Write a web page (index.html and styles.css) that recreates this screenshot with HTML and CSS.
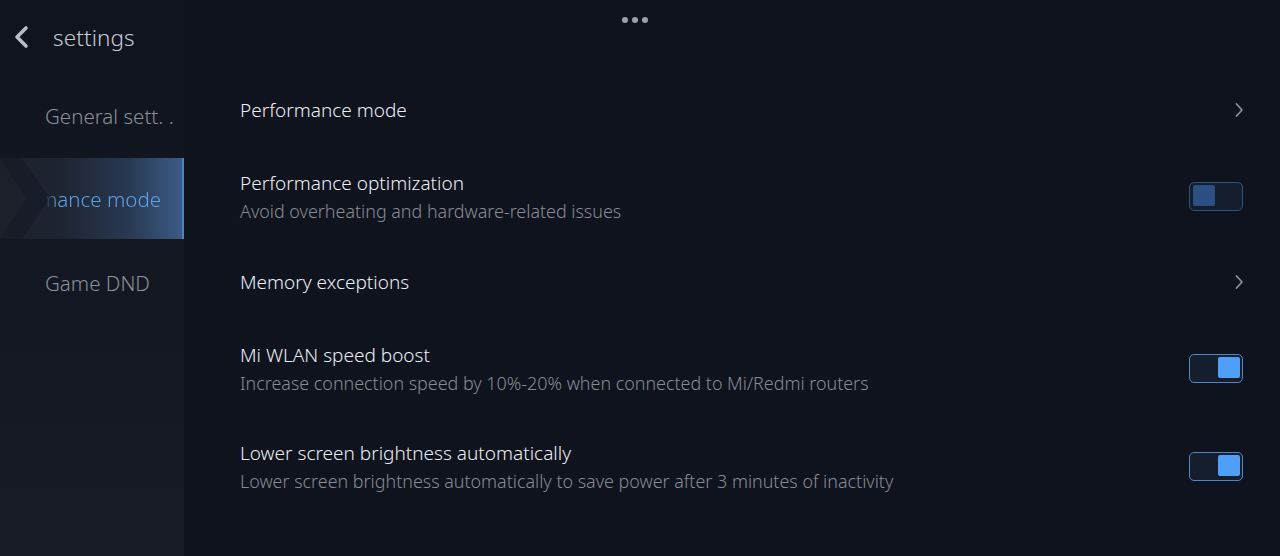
FILE: index.html
```html
<!DOCTYPE html>
<html lang="en">
<head>
<meta charset="utf-8">
<title>settings</title>
<link rel="stylesheet" href="styles.css">
</head>
<body>
<div class="app">
  <div class="handle" aria-hidden="true"><span></span><span></span><span></span></div>
  <aside class="side">
    <header class="head">
      <svg class="back" width="22" height="24" viewBox="0 0 22 24"><path d="M14 3 L5 12 L14 21" fill="none" stroke="#b9bdc6" stroke-width="3.6" stroke-linecap="round" stroke-linejoin="round"/></svg>
      <h1 class="title">settings</h1>
    </header>
    <nav class="nav">
      <div class="nav-item"><span class="nav-text">General sett. .</span></div>
      <div class="nav-item active">
        <svg class="arrow" width="60" height="81" viewBox="0 0 60 81"><polygon points="0,0 22,0 50,40.5 22,81 0,81 26,40.5" fill="#0d111a" opacity="0.3"/></svg>
        <div class="clip"><span class="nav-text">Performance mode</span></div>
      </div>
      <div class="nav-item"><span class="nav-text">Game DND</span></div>
    </nav>
  </aside>
  <main class="main">
    <div class="row single">
      <div class="texts"><div class="t">Performance mode</div></div>
      <svg class="chev" width="10" height="16" viewBox="0 0 10 16"><path d="M2.5 2 L8 8 L2.5 14" fill="none" stroke="#8c9099" stroke-width="1.8" stroke-linecap="round" stroke-linejoin="round"/></svg>
    </div>
    <div class="row double">
      <div class="texts"><div class="t">Performance optimization</div><div class="s">Avoid overheating and hardware-related issues</div></div>
      <div class="toggle off"><span class="knob"></span></div>
    </div>
    <div class="row single">
      <div class="texts"><div class="t">Memory exceptions</div></div>
      <svg class="chev" width="10" height="16" viewBox="0 0 10 16"><path d="M2.5 2 L8 8 L2.5 14" fill="none" stroke="#8c9099" stroke-width="1.8" stroke-linecap="round" stroke-linejoin="round"/></svg>
    </div>
    <div class="row double">
      <div class="texts"><div class="t">Mi WLAN speed boost</div><div class="s">Increase connection speed by 10%-20% when connected to Mi/Redmi routers</div></div>
      <div class="toggle on"><span class="knob"></span></div>
    </div>
    <div class="row double last">
      <div class="texts"><div class="t">Lower screen brightness automatically</div><div class="s">Lower screen brightness automatically to save power after 3 minutes of inactivity</div></div>
      <div class="toggle on"><span class="knob"></span></div>
    </div>
  </main>
</div>
</body>
</html>
```
FILE: styles.css
```css
* { box-sizing: border-box; margin: 0; padding: 0; }
html, body { width: 1280px; height: 556px; overflow: hidden; }
body {
  background: #0f131e;
  font-family: "Noto Sans", "Open Sans", sans-serif;
  font-weight: 300;
  color: #e9ebef;
}
.app {
  position: relative;
  display: flex;
  height: 556px;
}
.handle {
  position: absolute;
  left: 622px;
  top: 17px;
  display: flex;
  gap: 4px;
}
.handle span {
  width: 6px; height: 6px; border-radius: 50%;
  background: #9ba0aa;
}
.side {
  width: 184px;
  flex: none;
  display: flex;
  flex-direction: column;
  background: linear-gradient(180deg, #0f131e 0%, #11151f 20%, #161b26 100%);
}
.head {
  height: 76px;
  display: flex;
  align-items: center;
  padding-left: 12px;
  padding-bottom: 2px;
}
.back { margin-right: 19px; }
.title {
  font-weight: 300;
  font-size: 22.5px;
  color: #c6cad2;
  letter-spacing: 0.1px;
}
.nav { display: flex; flex-direction: column; }
.nav-item {
  position: relative;
  height: 82px;
  display: flex;
  align-items: center;
  padding-left: 45px;
}
.nav-item:first-child { padding-bottom: 3px; }
.nav-item:last-child { padding-top: 5px; }
.nav-text {
  font-size: 20.5px;
  color: #8b9099;
  white-space: nowrap;
}
.nav-item.active {
  height: 81px;
  background: linear-gradient(90deg, #1b202b 0%, #1e2532 35%, #283850 70%, #3b5b86 100%);
  border-right: 2px solid #4d82c4;
}
.arrow { position: absolute; left: 0; top: 0; }
.clip {
  position: relative;
  width: 116px;
  display: flex;
  justify-content: flex-end;
  overflow: hidden;
  -webkit-mask-image: linear-gradient(90deg, transparent 0, #000 12px);
  mask-image: linear-gradient(90deg, transparent 0, #000 12px);
}
.active .nav-text { color: #5ea0e6; flex: none; }
.main {
  flex: 1;
  padding: 70px 37px 0 56px;
  display: flex;
  flex-direction: column;
}
.row {
  display: flex;
  align-items: center;
  justify-content: space-between;
}
.row.single { height: 80px; }
.row.double { height: 92px; }
.row.last { margin-top: 6px; }
.texts { display: flex; flex-direction: column; gap: 3px; }
.t { font-size: 19px; line-height: 26px; color: #eceef2; }
.s { font-size: 17.9px; line-height: 24px; color: #878b94; }
.chev { margin-right: -1px; }
.toggle {
  width: 54px; height: 29px;
  border-radius: 5px;
  border: 1.5px solid #3d679a;
  background: #151e2c;
  padding: 2.5px;
  display: flex;
}
.knob {
  width: 22px; height: 21px;
  border-radius: 2px;
}
.toggle.off .knob { background: #2b5081; }
.toggle.off { border-color: #2f5480; }
.toggle.on { justify-content: flex-end; border-color: #4d85c8; }
.toggle.on .knob { background: #4e9ff5; }
```
